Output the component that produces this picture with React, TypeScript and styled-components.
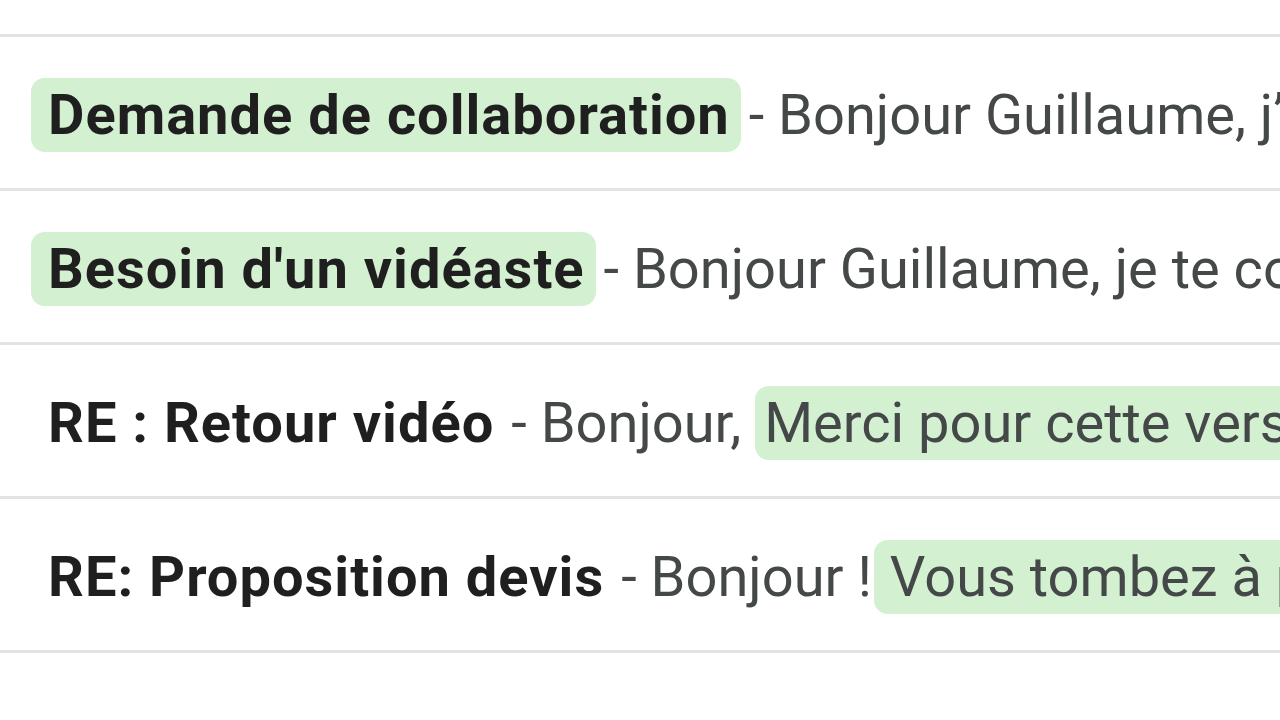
import styled, { createGlobalStyle } from 'styled-components';

const GlobalStyle = createGlobalStyle`
  html, body {
    margin: 0;
    padding: 0;
    background: #ffffff;
  }
`;

const List = styled.div`
  padding-top: 34px;
  width: 1280px;
  overflow: hidden;
`;

const Row = styled.div`
  display: flex;
  align-items: center;
  box-sizing: border-box;
  height: 154px;
  padding: 5px 0 0 31px;
  border-top: 3px solid #e3e3e6;
  white-space: nowrap;
  overflow: hidden;
  font-size: 56px;

  &:last-child {
    height: 157px;
    border-bottom: 3px solid #e3e3e6;
  }
`;

interface MarkProp {
  marked?: boolean;
}

const Subject = styled.span<MarkProp>`
  display: inline-block;
  font-family: Roboto, 'Liberation Sans', sans-serif;
  font-weight: 700;
  letter-spacing: 1px;
  color: #1f1f1f;
  line-height: 74px;
  padding: 0 ${(props) => (props.marked ? '11px' : '17px')} 0 17px;
  margin-right: ${(props) => (props.marked ? '8px' : '0')};
  border-radius: 14px;
  background: ${(props) => (props.marked ? '#d3f0d0' : 'transparent')};
`;

const Snippet = styled.span`
  font-family: Roboto, 'Liberation Sans', sans-serif;
  font-weight: 400;
  color: #454848;
  line-height: 74px;
`;

interface HitProp {
  tight?: boolean;
}

const Hit = styled.span<HitProp>`
  display: inline-block;
  background: #d3f0d0;
  border-radius: 14px;
  margin-left: ${(props) => (props.tight ? '2px' : '0')};
  padding: 0 9px 0 ${(props) => (props.tight ? '16px' : '9px')};
  line-height: 74px;
`;

const mails = [
  {
    subject: 'Demande de collaboration',
    marked: true,
    before: '- Bonjour Guillaume, j\u2019espère que tu vas bien',
    hit: '',
    tight: false,
  },
  {
    subject: "Besoin d'un vidéaste",
    marked: true,
    before: '- Bonjour Guillaume, je te contacte pour un projet',
    hit: '',
    tight: false,
  },
  {
    subject: 'RE : Retour vidéo',
    marked: false,
    before: '- Bonjour, ',
    hit: 'Merci pour cette version du montage',
    tight: false,
  },
  {
    subject: 'RE: Proposition devis',
    marked: false,
    before: '- Bonjour !',
    hit: 'Vous tombez à pic',
    tight: true,
  },
];

const App = () => {
  return (
    <>
      <GlobalStyle />
      <List>
        {mails.map((mail) => (
          <Row key={mail.subject}>
            <Subject marked={mail.marked}>{mail.subject}</Subject>
            <Snippet>
              {mail.before}
              {mail.hit && <Hit tight={mail.tight}>{mail.hit}</Hit>}
            </Snippet>
          </Row>
        ))}
      </List>
    </>
  );
};

export default App;
